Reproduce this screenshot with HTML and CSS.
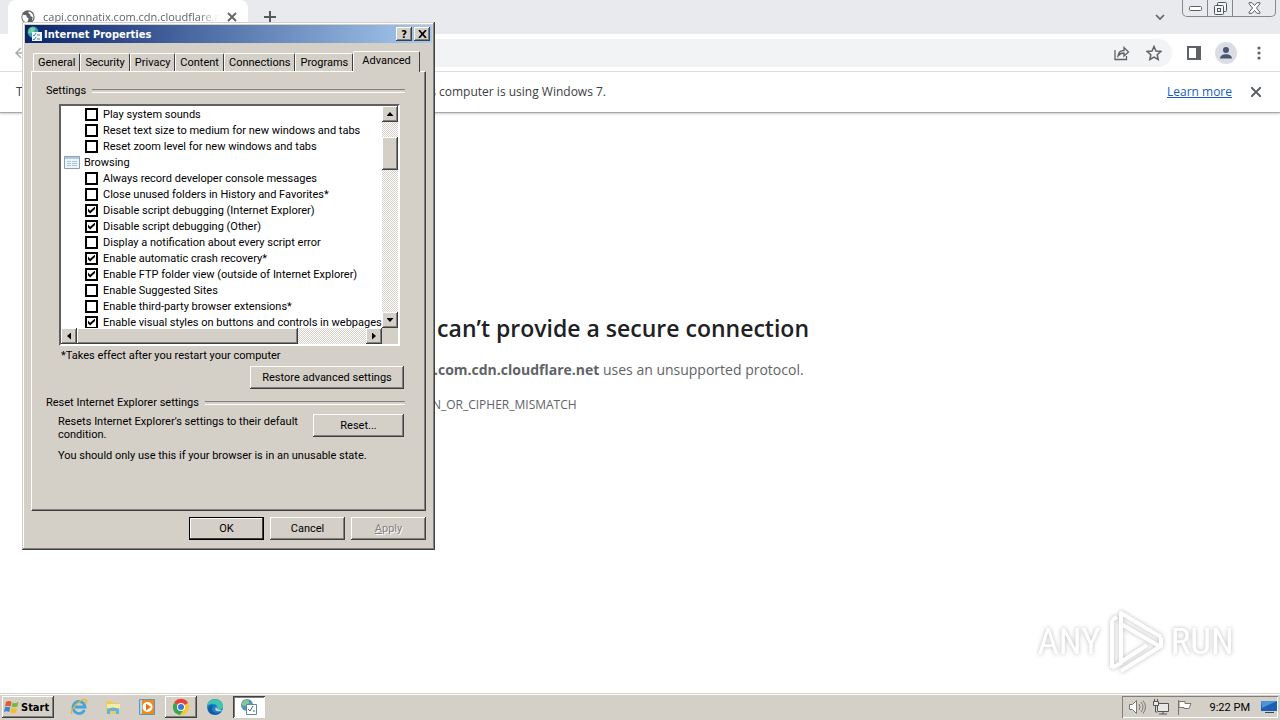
FILE: index.html
```html
<!DOCTYPE html>
<html lang="en">
<head>
<meta charset="utf-8">
<title>Internet Properties</title>
<link rel="stylesheet" href="styles.css">
</head>
<body>
<div class="desktop">
  <section class="browser">
    <header class="tabstrip">
      <div class="page-tab">
        <svg class="globe" viewBox="0 0 16 16" width="14" height="14"><circle cx="8" cy="8" r="7.6" fill="#5f6368"/><path d="M2 5.5C4 6 6 5 6.500 7.500S9 8.500 8.500 10.500 7 13 7 14.500C3.500 14 1.500 11 1.500 8zM9 1.800C8 3 8.500 4 10 4.500S10 7 12 7.500 13 10 12.500 12.500C15 10 15.500 4 9 1.800z" fill="#fff"/></svg>
        <span class="page-title">capi.connatix.com.cdn.cloudflare.net</span>
        <button class="ghost" aria-label="Close tab"><svg width="10" height="10" viewBox="0 0 10 10"><path d="M1 1l8 8M9 1l-8 8" stroke="#5f6368" stroke-width="1.800"/></svg></button>
      </div>
      <button class="ghost new-tab" aria-label="New tab"><svg width="12" height="12" viewBox="0 0 12 12"><path d="M6 0v12M0 6h12" stroke="#55585c" stroke-width="2"/></svg></button>
      <span class="spacer"></span>
      <button class="ghost tab-search" aria-label="Search tabs"><svg width="10" height="7" viewBox="0 0 10 7"><path d="M1 1l4 4 4-4" fill="none" stroke="#5f6368" stroke-width="1.700"/></svg></button>
      <div class="caption">
        <button aria-label="Minimize"><svg width="13" height="5" viewBox="0 0 13 5"><rect x=".5" y=".5" width="12" height="4" rx="1" fill="#fff" stroke="#5a5f66"/></svg></button>
        <button aria-label="Restore"><svg width="13" height="13" viewBox="0 0 13 13" fill="#f4f5f6" stroke="#4f545b"><rect x="3.500" y=".5" width="9" height="9" rx="1"/><rect x=".5" y="3.500" width="9" height="9" rx="1"/><rect x="3.500" y="6.500" width="3" height="3"/></svg></button>
        <button class="wide" aria-label="Close"><svg width="13" height="12" viewBox="0 0 13 12"><path d="M1 .7h3l2.500 2.800L9 .7h3v1L8.500 6l3.500 4.300v1H9L6.500 8.500 4 11.300H1v-1L4.500 6 1 1.700z" fill="#fff" stroke="#5a5f66"/></svg></button>
      </div>
    </header>
    <div class="toolbar">
      <button class="ghost" aria-label="Back"><svg width="14" height="14" viewBox="0 0 14 14"><path d="M14 7H2M7 2L2 7l5 5" fill="none" stroke="#aaadb0" stroke-width="1.500"/></svg></button>
      <div class="address">
        <button class="ghost" aria-label="Share"><svg width="16" height="16" viewBox="0 0 16 16" fill="none" stroke="#5f6368" stroke-width="1.300"><path d="M1 5v9.500h11.500V11M4 11c.5-4 3-5.500 6-5.500V2.500L14.500 7 10 11V8C7.500 8 5.500 9 4 11z"/></svg></button>
        <button class="ghost" aria-label="Bookmark"><svg width="16" height="16" viewBox="0 0 16 16"><path d="M8 1.500l2 4.500 4.800.5-3.600 3.200 1 4.800L8 12l-4.200 2.500 1-4.800L1.200 6.500 6 6z" fill="none" stroke="#5f6368" stroke-width="1.500"/></svg></button>
      </div>
      <button class="ghost panel-icon" aria-label="Side panel"><svg width="14" height="14" viewBox="0 0 14 14"><path d="M1 1h12v12H1z" fill="none" stroke="#5f6368" stroke-width="2"/><path d="M9 1h4v12H9z" fill="#5f6368"/></svg></button>
      <button class="ghost avatar" aria-label="Profile"><svg width="14" height="14" viewBox="0 0 14 14" fill="#4a5672"><circle cx="7" cy="4" r="3"/><path d="M1 12.500C1 6.800 13 6.800 13 12.500z"/></svg></button>
      <button class="ghost menu" aria-label="Menu"><svg width="4" height="14" viewBox="0 0 4 14" fill="#5f6368"><circle cx="2" cy="2" r="1.600"/><circle cx="2" cy="7" r="1.600"/><circle cx="2" cy="12" r="1.600"/></svg></button>
    </div>
    <div class="infobar">
      <p class="notice"><span>To get future Google Chrome updates, you'll need Windows 10.</span><span>This computer is using Windows 7.</span></p>
      <a href="#">Learn more</a>
      <button class="ghost" aria-label="Dismiss"><svg width="10" height="10" viewBox="0 0 10 10"><path d="M0 0l10 10M10 0L0 10" stroke="#5f6368" stroke-width="2"/></svg></button>
    </div>
    <main class="page">
      <div class="error">
        <h1>This site can’t provide a secure connection</h1>
        <p class="reason"><b>capi.connatix.com.cdn.cloudflare.net</b> uses an unsupported protocol.</p>
        <p class="code">ERR_SSL_VERSION_OR_CIPHER_MISMATCH</p>
      </div>
      <div class="watermark">
        <span>ANY</span>
        <svg width="58" height="64" viewBox="0 0 58 64" fill="none" stroke="#fff" stroke-width="4" stroke-linejoin="round"><path d="M14 45V3l40 24M14 14l38 22M5 10v48M10 7L5 10M14 61l40-25V27M14 52l26-17M5 58l9-5V24"/></svg>
        <span>RUN</span>
      </div>
    </main>
  </section>

  <footer class="taskbar">
    <button class="start"><svg width="16" height="16" viewBox="0 0 16 16"><path d="M2 3q3-2 5.500 0L6.500 7.500Q4 6 1 7.500z" fill="#e8562a"/><path d="M8.500 3.500q3 1.500 6-.5L13.500 7.500q-3 1.500-6 0z" fill="#7db83a"/><path d="M.8 8.500q3-1.500 5.500 0L5.200 13Q3 11.500 0 13z" fill="#3c86d0"/><path d="M7.200 9q3 1.500 6 0L12 13.500q-3 1.500-6 0z" fill="#f5bd27"/></svg>Start</button>
    <button class="task first" aria-label="Internet Explorer"><svg width="18" height="18" viewBox="0 0 18 18" fill="none"><path d="M14.500 12A6 6 0 1 1 15 9H5" stroke="#45a4dc" stroke-width="2.800"/><path d="M2 16C-1 12 12-1 16 2c1 1 0 3-1 4" stroke="#e5b62c" stroke-width="1.300"/></svg></button>
    <button class="task" aria-label="Explorer"><svg width="18" height="18" viewBox="0 0 18 18"><path d="M2 3h6l1 2h6v11H2z" fill="#eacb65"/><path d="M3 6h13v4H3z" fill="#f8eaa9"/><path d="M3 16v-5q6-3 12 0v5h-3v-3H6v3z" fill="#63b4d9"/></svg></button>
    <button class="task" aria-label="Media Player"><svg width="18" height="18" viewBox="0 0 18 18"><path d="M1.500 1.500h15v15h-15z" fill="#b9d6ec" stroke="#5c94c4"/><path d="M4 2h12v14H4z" fill="#f08a1c"/><circle cx="9.500" cy="9" r="5" fill="#fff"/><path d="M8 5.500l5 3.500-5 3.500z" fill="#f07010"/></svg></button>
    <button class="task raised" aria-label="Chrome"><svg width="18" height="18" viewBox="0 0 18 18"><circle cx="9" cy="9" r="8" fill="#f8c92e"/><path d="M9 9L2 5a8 8 0 0 1 14 0z" fill="#e6443a"/><path d="M9 9L2 5a8 8 0 0 0 6 12l4-6z" fill="#36a752"/><circle cx="9" cy="9" r="4" fill="#fff"/><circle cx="9" cy="9" r="3" fill="#3b78d8"/></svg></button>
    <button class="task" aria-label="Edge"><svg width="18" height="18" viewBox="0 0 18 18"><circle cx="9" cy="9" r="8" fill="#1781cf"/><path d="M1 8C2-1 17-1 17 8c0 4-5 4-6 3 2-5-6-7-10-3z" fill="#40c6ac"/><path d="M6 9c-1 5 4 7 9 5-3 4-13 4-13-3 0-3 4-5 7-3-2 0-3 0-3 1z" fill="#145b9f"/><path d="M10 9q1 3 6 3-2 2-5 1-3-1-1-4z" fill="#d4d0c8"/></svg></button>
    <button class="task pressed" aria-label="Internet Properties"><svg width="18" height="18" viewBox="0 0 18 18"><circle cx="7" cy="7" r="6" fill="#4a98bd"/><path d="M4 3q5-3 5 1T5 8 2 5z" fill="#8bc58d"/><path d="M6.500 6.500h10v10h-10z" fill="#fff" stroke="#63869c"/><path d="M8 11l2 2 3-5M13 13h2" fill="none" stroke="#356da2"/></svg></button>
    <span class="spacer"></span>
    <div class="tray">
      <svg width="18" height="16" viewBox="0 0 18 16" fill="#fff" stroke="#777"><path d="M1.500 5.500h3l4-4v13l-4-4h-3z"/><path d="M11 5q2 3 0 6M13 3q4 5 0 10M15 1.500q5 6.500 0 13" fill="none"/></svg>
      <svg width="18" height="16" viewBox="0 0 18 16" fill="#e8e8e8" stroke="#555"><path d="M5.500 4.500h11v8h-11zM7 15h8M11 12v3"/><path d="M1.500 2.500h5v4h-5zM2.500 0v2M5.500 0v2M3.500 7v6h2"/></svg>
      <svg width="18" height="16" viewBox="0 0 18 16" fill="#fff" stroke="#777"><path d="M2.500 1v15"/><path d="M3 2.500h6v2h6l-2 5H8v-1H3z"/></svg>
      <time>9:22 PM</time>
      <svg width="16" height="14" viewBox="0 0 16 14"><path d="M0 1h16v10H0z" fill="#1c5fb4"/><path d="M0 1h16L1 8z" fill="#4d93d9"/><path d="M4 12h9v1H4z" fill="#33485f"/></svg>
    </div>
  </footer>

  <section class="dialog" role="dialog" aria-labelledby="dialog-title">
    <header class="titlebar">
      <svg width="16" height="16" viewBox="0 0 16 16"><circle cx="6" cy="6" r="5.500" fill="#3f9db4"/><path d="M3 2q5-2 5 1T4 7 2 5z" fill="#7bd396"/><path d="M5 6h10v9H5z" fill="#eef7fb"/><path d="M6 9l1 1 2-3M6 13l1 1 2-3M10 9h3M10 13h3" fill="none" stroke="#467db0"/></svg>
      <h2 id="dialog-title">Internet Properties</h2>
      <button class="btn cap" aria-label="Help">?</button>
      <button class="btn cap" aria-label="Close dialog"><svg width="9" height="8" viewBox="0 0 9 8"><path d="M1 0l7 8M8 0L1 8" stroke="#000" stroke-width="1.700"/></svg></button>
    </header>
    <div class="tabs" role="tablist">
      <button role="tab">General</button><button role="tab">Security</button><button role="tab">Privacy</button><button role="tab">Content</button><button role="tab">Connections</button><button role="tab">Programs</button><button role="tab" aria-selected="true" class="active">Advanced</button>
    </div>
    <div class="panel" role="tabpanel">
      <h3 class="legend">Settings</h3>
      <div class="listbox">
        <div class="rows">
          <label><input type="checkbox">Play system sounds</label>
          <label><input type="checkbox">Reset text size to medium for new windows and tabs</label>
          <label><input type="checkbox">Reset zoom level for new windows and tabs</label>
          <div class="category"><svg width="16" height="13" viewBox="0 0 16 13"><path d="M.5.5h15v12H.5z" fill="#eef5fa" stroke="#8aa0b3"/><path d="M1 1h14v2H1z" fill="#b5cbdc"/><path d="M3 5.500h4M3 7.500h4M3 9.500h4M8 5.500h5M8 7.500h5M8 9.500h5" stroke="#a9c6db"/></svg>Browsing</div>
          <label><input type="checkbox">Always record developer console messages</label>
          <label><input type="checkbox">Close unused folders in History and Favorites*</label>
          <label><input type="checkbox" checked>Disable script debugging (Internet Explorer)</label>
          <label><input type="checkbox" checked>Disable script debugging (Other)</label>
          <label><input type="checkbox">Display a notification about every script error</label>
          <label><input type="checkbox" checked>Enable automatic crash recovery*</label>
          <label><input type="checkbox" checked>Enable FTP folder view (outside of Internet Explorer)</label>
          <label><input type="checkbox">Enable Suggested Sites</label>
          <label><input type="checkbox">Enable third-party browser extensions*</label>
          <label><input type="checkbox" checked>Enable visual styles on buttons and controls in webpages</label>
        </div>
        <div class="vscroll"><button class="btn arrow" aria-label="Scroll up"><i class="up"></i></button><span class="track-start"></span><span class="btn thumb"></span><span class="spacer"></span><button class="btn arrow" aria-label="Scroll down"><i class="down"></i></button></div>
        <div class="hscroll"><button class="btn arrow" aria-label="Scroll left"><i class="left"></i></button><span class="btn thumb"></span><span class="spacer"></span><button class="btn arrow" aria-label="Scroll right"><i class="right"></i></button></div>
      </div>
      <p class="note">*Takes effect after you restart your computer</p>
      <button class="btn restore">Restore advanced settings</button>
      <h3 class="legend">Reset Internet Explorer settings</h3>
      <div class="reset">
        <p>Resets Internet Explorer's settings to their default condition.</p>
        <button class="btn">Reset...</button>
      </div>
      <p class="warning">You should only use this if your browser is in an unusable state.</p>
    </div>
    <div class="actions">
      <button class="btn default">OK</button>
      <button class="btn">Cancel</button>
      <button class="btn" disabled><u>A</u>pply</button>
    </div>
  </section>
</div>
</body>
</html>
```
FILE: styles.css
```css
* { box-sizing: border-box; }
body, h1, h2, h3, p { margin: 0; }
body { font: 11px/13px Roboto, "Noto Sans", sans-serif; color: #000; }
button { font: inherit; color: inherit; padding: 0; border: 0; background: none; }
svg { display: block; flex: none; }
.desktop { position: relative; display: flex; flex-direction: column; min-height: 100vh; overflow: hidden; }
.spacer { flex: 1; }
.ghost { display: flex; align-items: center; justify-content: center; flex: none; }

/* Browser */
.browser { flex: 1; display: flex; flex-direction: column; background: #fff; font-family: "Open Sans", "Noto Sans", sans-serif; }
.tabstrip { display: flex; height: 34px; padding-left: 8px; background: #e8eaed; }
.page-tab { display: flex; align-items: center; gap: 8px; width: 240px; padding: 0 11px 0 13px; border-radius: 8px 8px 0 0; background: #fff; }
.page-title { flex: 1; min-width: 0; overflow: hidden; white-space: nowrap; font-size: 11px; line-height: 18px; color: #5f6368; mask-image: linear-gradient(90deg, #000 88%, transparent); }
.new-tab { width: 44px; }
.tab-search { padding: 0 17px 0 0; }
.caption { display: flex; align-self: flex-start; height: 17px; margin-right: 4px; border: 1px solid #84888e; border-top: 0; border-radius: 0 0 5px 5px; }
.caption button { display: flex; justify-content: center; align-items: center; width: 25px; border-right: 1px solid #84888e; }
.caption .wide { width: 42px; border: 0; }
.toolbar { display: flex; align-items: center; height: 38px; padding: 0 19px 0 14px; border-bottom: 1px solid #dcdee0; }
.address { flex: 1; display: flex; justify-content: flex-end; gap: 16px; height: 28px; margin-left: 80px; padding-right: 10px; border-radius: 14px; background: #f1f3f4; }
.panel-icon { margin-left: 15px; }
.avatar { width: 22px; height: 22px; margin: 0 20px 0 14px; border-radius: 50%; background: #dadde3; }
.infobar { display: flex; align-items: center; height: 41px; padding: 0 19px 0 16px; border-bottom: 1px solid #a9a9a9; box-shadow: 0 1px 2px #ccc; font-size: 12px; line-height: 18px; color: #3c4043; }
.notice { display: flex; justify-content: space-between; width: 590px; margin-right: auto; white-space: nowrap; }
.infobar a { margin-right: 19px; color: #1a5cc0; }
.page { flex: 1; display: flex; flex-direction: column; justify-content: space-between; padding: 200px 46px 19px; }
.error { width: 100%; max-width: 600px; margin: 0 auto; color: #5f6368; }
.error h1 { font-size: 23px; line-height: 30px; font-weight: 600; color: #202124; }
.reason { margin-top: 16px; font-size: 14px; line-height: 22px; }
.code { margin-top: 15px; font-size: 12px; line-height: 18px; }
.watermark { display: flex; align-items: center; align-self: flex-end; gap: 6px; font: 37px/40px "Roboto Condensed", "Roboto", sans-serif; color: #fff; filter: drop-shadow(0 0 2px #bbb); }

/* Taskbar */
.taskbar { display: flex; align-items: center; height: 27px; padding: 0 2px; background: #d4d0c8; border-top: 1px solid #d4d0c8; box-shadow: inset 0 1px #fff; }
.start, .raised, .btn { background: #d4d0c8; box-shadow: inset -1px -1px #404040, inset 1px 1px #fff, inset -2px -2px #808080; }
.start { display: flex; align-items: center; gap: 1px; width: 52px; height: 22px; padding-left: 2px; }
.start, .titlebar { font-family: "DejaVu Sans Condensed", "DejaVu Sans", sans-serif; font-weight: bold; }
.task { display: flex; align-items: center; justify-content: center; width: 32px; height: 22px; margin-right: 2px; }
.task.first { margin-left: 9px; }
.pressed { background: #fff; box-shadow: inset 1px 1px #404040, inset -1px -1px #fff, inset 2px 2px #808080; }
.tray { display: flex; align-items: center; gap: 6px; height: 22px; padding: 0 1px 0 6px; box-shadow: inset 1px 1px #808080, inset -1px -1px #fff; }
.tray time { margin: 0 5px 0 10px; }

/* Internet Properties window */
.dialog { position: absolute; left: 22px; top: 22px; width: 413px; padding: 3px 3px 10px; background: #d4d0c8; box-shadow: inset -1px -1px #404040, inset 1px 1px #d4d0c8, inset -2px -2px #808080, inset 2px 2px #fff; }
.titlebar { display: flex; align-items: center; height: 18px; padding: 0 2px; background: linear-gradient(90deg, #0a246a, #a6caf0); color: #fff; }
.titlebar h2 { flex: 1; padding-left: 1px; font-size: 11px; line-height: 13px; }
.cap { display: flex; align-items: center; justify-content: center; width: 16px; height: 14px; color: #000; }
.cap + .cap { margin-left: 2px; }
.tabs { display: flex; align-items: flex-end; height: 28px; padding-left: 8px; }
.tabs button { flex: none; height: 18px; padding: 0 4px; border-left: 1px solid #fff; border-top: 1px solid #fff; border-right: 1px solid #404040; border-radius: 2px 2px 0 0; }
.tabs .active { position: relative; height: 21px; margin-bottom: -1px; padding: 0 8px 3px; background: #d4d0c8; }
.panel { min-height: 440px; margin: 0 6px; padding: 12px 20px 0 14px; border: 1px solid; border-color: #fff #404040 #404040 #fff; box-shadow: inset -1px -1px #808080; }
.legend { display: flex; align-items: center; gap: 6px; font-size: 11px; line-height: 13px; font-weight: normal; }
.legend::after { content: ""; flex: 1; height: 2px; border-top: 1px solid #808080; border-bottom: 1px solid #fff; }
.listbox { display: grid; grid-template: 222px 16px / 1fr 16px; width: 341px; margin: 7px 0 0 13px; border: 2px solid; border-color: #606060 #fff #fff #606060; }
.rows { overflow: hidden; background: #fff; white-space: nowrap; }
.rows label, .category { display: flex; align-items: center; height: 16px; }
.rows label { gap: 5px; padding-left: 24px; }
.category { gap: 4px; padding-left: 3px; }
.rows input { appearance: none; display: grid; place-items: center; flex: none; width: 13px; height: 13px; margin: 0; border: 2px solid #000; background: #fff; }
.rows input:checked::before { content: ""; width: 7px; height: 7px; background: #000; clip-path: polygon(0 30%, 30% 60%, 100% 0, 100% 36%, 30% 100%, 0 70%); }
.vscroll, .hscroll { display: flex; background: repeating-conic-gradient(#fff 0 25%, #d4d0c8 0 50%) 0 0 / 2px 2px; }
.vscroll { flex-direction: column; }
.arrow { display: flex; align-items: center; justify-content: center; width: 16px; height: 16px; }
.arrow i { width: 7px; height: 4px; background: #000; }
.up { clip-path: polygon(50% 0, 100% 100%, 0 100%); }
.down { clip-path: polygon(0 0, 100% 0, 50% 100%); }
.arrow .left, .arrow .right { width: 4px; height: 7px; }
.left { clip-path: polygon(100% 0, 100% 100%, 0 50%); }
.right { clip-path: polygon(0 0, 100% 50%, 0 100%); }
.track-start { height: 15px; }
.vscroll .thumb { height: 33px; }
.hscroll .thumb { width: 221px; }
.note { margin: 3px 0 0 15px; }
.restore { display: block; height: 23px; width: 154px; margin: 4px 1px 7px auto; }
.reset { display: flex; justify-content: space-between; margin: 5px 1px 0 12px; }
.reset p { width: 250px; padding-top: 1px; }
.reset .btn { width: 91px; height: 23px; }
.warning { margin: 8px 0 0 12px; white-space: nowrap; }
.actions { display: flex; justify-content: flex-end; gap: 6px; padding: 6px 6px 0; }
.actions .btn { width: 75px; height: 23px; }
.actions .default { box-shadow: inset 0 0 0 1px #000, inset -2px -2px #404040, inset 2px 2px #fff; }
.btn:disabled { color: #808080; text-shadow: 1px 1px #fff; }
```
